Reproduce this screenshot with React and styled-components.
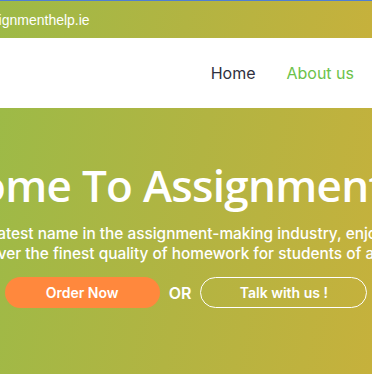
import React from 'react'
import styled, { createGlobalStyle } from 'styled-components'

const GlobalStyle = createGlobalStyle`
    html, body {
        margin: 0;
        padding: 0;
        overflow: hidden;
    }
    body {
        font-family: Inter, "Open Sans", sans-serif;
        background: #fff;
    }
`

const gradient = 'linear-gradient(100deg, #9dba47 0%, #b2b442 50%, #c6b13c 100%)'

const Page = styled.div`
    width: 372px;
    height: 374px;
    overflow: hidden;
    display: flex;
    flex-direction: column;
`

const TopBar = styled.div`
    height: 38px;
    flex-shrink: 0;
    background: ${gradient};
    border-top: 1px solid #4f7fd3;
    box-sizing: border-box;
    display: flex;
    justify-content: center;
    align-items: center;
`

const Inner = styled.div`
    width: ${p => p.$width || 492}px;
    flex-shrink: 0;
    display: flex;
    align-items: center;
    justify-content: ${p => p.$justify || 'flex-start'};
    box-sizing: border-box;
    padding: ${p => p.$pad || '0'};
`

const Mail = styled.span`
    color: #fff;
    font-family: "Liberation Sans", Arial, sans-serif;
    font-size: 14px;
    white-space: nowrap;
`

const Nav = styled.nav`
    height: 70px;
    flex-shrink: 0;
    background: #fff;
    display: flex;
    justify-content: center;
    align-items: center;
`

const NavLinks = styled.div`
    display: flex;
    gap: 31px;
`

const NavLink = styled.a`
    font-family: Inter, sans-serif;
    font-size: 16px;
    color: ${p => (p.$active ? '#6cc24a' : '#2f3140')};
    text-decoration: none;
    white-space: nowrap;
`

const Hero = styled.section`
    flex: 1;
    background: ${gradient};
    display: flex;
    flex-direction: column;
    align-items: center;
    padding-top: 50px;
`

const Title = styled.h1`
    margin: 0;
    font-family: "Open Sans", sans-serif;
    font-weight: 600;
    font-size: 44px;
    letter-spacing: -0.7px;
    line-height: 54px;
    color: #fff;
    white-space: nowrap;
`

const Sub = styled.p`
    margin: 12px 0 0;
    font-family: Inter, sans-serif;
    font-weight: 500;
    font-size: 15.4px;
    line-height: 20px;
    color: #fff;
    text-align: center;
    white-space: nowrap;
    display: flex;
    flex-direction: column;
    align-items: center;
`

const Buttons = styled.div`
    display: flex;
    align-items: center;
    gap: 9px;
    margin-top: 13px;
`

const Button = styled.a`
    display: flex;
    align-items: center;
    justify-content: center;
    box-sizing: border-box;
    height: 31px;
    width: ${p => p.$w}px;
    border-radius: 16px;
    font-family: Inter, sans-serif;
    font-weight: 600;
    font-size: 14px;
    color: #fff;
    background: ${p => (p.$outline ? 'transparent' : '#ff883d')};
    border: ${p => (p.$outline ? '1.5px solid #fff' : 'none')};
    white-space: nowrap;
`

const Or = styled.span`
    font-family: Inter, sans-serif;
    font-weight: 600;
    font-size: 16px;
    color: #fff;
`

const App = () => {
    return (
        <Page>
            <GlobalStyle />
            <TopBar>
                <Inner>
                    <Mail>info@assignmenthelp.ie</Mail>
                </Inner>
            </TopBar>
            <Nav>
                <Inner $justify="flex-end" $pad="0 78px 0 0">
                    <NavLinks>
                        <NavLink>Home</NavLink>
                        <NavLink $active>About us</NavLink>
                    </NavLinks>
                </Inner>
            </Nav>
            <Hero>
                <Title>Welcome To Assignment Help</Title>
                <Sub>
                    <span>As the greatest name in the assignment-making industry, enjoy our help</span>
                    <span>We deliver the finest quality of homework for students of all levels</span>
                </Sub>
                <Buttons>
                    <Button $w={155}>Order Now</Button>
                    <Or>OR</Or>
                    <Button $outline $w={167}>Talk with us !</Button>
                </Buttons>
            </Hero>
        </Page>
    )
}

export default App
